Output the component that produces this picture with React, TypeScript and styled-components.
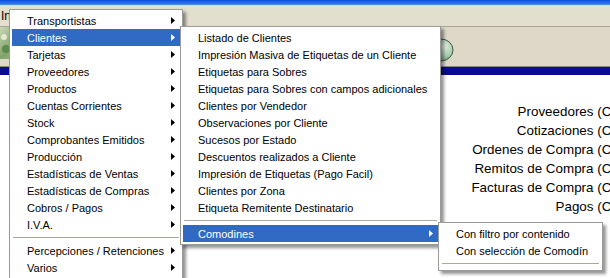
import styled, { createGlobalStyle } from "styled-components";

const GlobalStyle = createGlobalStyle`
  html, body {
    margin: 0;
    padding: 0;
    overflow: hidden;
    background: #fff;
  }
  body {
    font-family: "Liberation Sans", Arial, sans-serif;
  }
`;

type Entry = { label: string; sub?: boolean; active?: boolean } | "sep";

const mainItems: Entry[] = [
  { label: "Transportistas", sub: true },
  { label: "Clientes", sub: true, active: true },
  { label: "Tarjetas", sub: true },
  { label: "Proveedores", sub: true },
  { label: "Productos", sub: true },
  { label: "Cuentas Corrientes", sub: true },
  { label: "Stock", sub: true },
  { label: "Comprobantes Emitidos", sub: true },
  { label: "Producción", sub: true },
  { label: "Estadísticas de Ventas", sub: true },
  { label: "Estadísticas de Compras", sub: true },
  { label: "Cobros / Pagos", sub: true },
  { label: "I.V.A.", sub: true },
  "sep",
  { label: "Percepciones / Retenciones", sub: true },
  { label: "Varios", sub: true },
];

const clientItems: Entry[] = [
  { label: "Listado de Clientes" },
  { label: "Impresión Masiva de Etiquetas de un Cliente" },
  { label: "Etiquetas para Sobres" },
  { label: "Etiquetas para Sobres con campos adicionales" },
  { label: "Clientes por Vendedor" },
  { label: "Observaciones por Cliente" },
  { label: "Sucesos por Estado" },
  { label: "Descuentos realizados a Cliente" },
  { label: "Impresión de Etiquetas (Pago Facil)" },
  { label: "Clientes por Zona" },
  { label: "Etiqueta Remitente Destinatario" },
  "sep",
  { label: "Comodines", sub: true, active: true },
];

const wildcardItems: Entry[] = [
  { label: "Con filtro por contenido" },
  { label: "Con selección de Comodín" },
  "sep",
];

const reports = [
  "Proveedores",
  "Cotizaciones",
  "Ordenes de Compra",
  "Remitos de Compra",
  "Facturas de Compra",
  "Pagos",
];

function Arrow() {
  return (
    <svg width="4" height="7" viewBox="0 0 4 7">
      <polygon points="0,0 4,3.5 0,7" fill="currentColor" />
    </svg>
  );
}

function Menu({
  items,
  left,
  top,
  width,
}: {
  items: Entry[];
  left: number;
  top: number;
  width: number;
}) {
  return (
    <MenuPanel $left={left} $top={top} $width={width}>
      {items.map((it, i) =>
        it === "sep" ? (
          <Separator key={i} />
        ) : (
          <MenuItem key={i} $active={!!it.active}>
            <span>{it.label}</span>
            {it.sub && <Arrow />}
          </MenuItem>
        )
      )}
    </MenuPanel>
  );
}

export default function App() {
  return (
    <>
      <GlobalStyle />
      <Window>
        <TitleStrip />
        <MenuBar>
          <MenuBarItem>Informes</MenuBarItem>
        </MenuBar>
        <Toolbar>
          <ToolIcon $offset={0}>
            <svg width="30" height="32" viewBox="0 0 30 32">
              <defs>
                <linearGradient id="leaf" x1="0" y1="0" x2="1" y2="1">
                  <stop offset="0" stopColor="#c9d8b4" />
                  <stop offset="0.5" stopColor="#7fa36a" />
                  <stop offset="1" stopColor="#b6c9a0" />
                </linearGradient>
              </defs>
              <rect x="0" y="0" width="30" height="32" fill="url(#leaf)" />
              <circle cx="4" cy="10" r="3" fill="#e4e8cf" />
              <circle cx="6" cy="22" r="4" fill="#5e8a4c" />
            </svg>
          </ToolIcon>
          <ToolIcon $offset={398}>
            <svg width="26" height="24" viewBox="0 0 26 24">
              <defs>
                <radialGradient id="orb" cx="0.6" cy="0.35" r="0.7">
                  <stop offset="0" stopColor="#e6f2e6" />
                  <stop offset="0.6" stopColor="#a9cdb0" />
                  <stop offset="1" stopColor="#6f9a7a" />
                </radialGradient>
              </defs>
              <ellipse cx="13" cy="12" rx="12" ry="11" fill="url(#orb)" stroke="#3f5a46" strokeWidth="1" />
            </svg>
          </ToolIcon>
        </Toolbar>
        <HeaderBar />
        <Content>
          {reports.map((r) => (
            <ReportLine key={r}>{r} (Consulta)</ReportLine>
          ))}
        </Content>

        <Menu items={mainItems} left={9} top={9} width={174} />
        <Menu items={clientItems} left={180} top={26} width={261} />
        <Menu items={wildcardItems} left={438} top={222} width={165} />
      </Window>
    </>
  );
}

const Window = styled.div`
  position: relative;
  width: 610px;
  height: 278px;
  overflow: hidden;
  background: #fff;
`;

const TitleStrip = styled.div`
  height: 5px;
  background: linear-gradient(#0a4ddb, #2f74ea 70%, #5b93ec);
`;

const MenuBar = styled.div`
  height: 21px;
  display: flex;
  align-items: center;
  padding-left: 1px;
  background: #e3dfcf;
  border-bottom: 1px solid #a9a593;
`;

const MenuBarItem = styled.span`
  font-size: 12px;
  color: #000;
`;

const Toolbar = styled.div`
  height: 39px;
  display: flex;
  align-items: center;
  background: #ddd8c7;
  border-bottom: 1px solid #8c8878;
`;

const ToolIcon = styled.div<{ $offset: number }>`
  display: flex;
  margin-left: ${(p) => p.$offset}px;
  margin-top: ${(p) => (p.$offset ? 6 : -8)}px;
`;

const HeaderBar = styled.div`
  height: 8px;
  background: #0b0b94;
`;

const Content = styled.div`
  padding-top: 27px;
  margin-right: -49px;
  text-align: right;
`;

const ReportLine = styled.div`
  font-size: 13.4px;
  line-height: 19px;
  color: #000;
  white-space: nowrap;
`;

const MenuPanel = styled.div<{ $left: number; $top: number; $width: number }>`
  position: absolute;
  left: ${(p) => p.$left}px;
  top: ${(p) => p.$top}px;
  width: ${(p) => p.$width}px;
  box-sizing: border-box;
  padding: 2px;
  background: #fff;
  border: 1px solid #9a9a96;
  box-shadow: 3px 3px 3px rgba(0, 0, 0, 0.42);
`;

const MenuItem = styled.div<{ $active: boolean }>`
  height: 17px;
  display: flex;
  align-items: center;
  justify-content: space-between;
  padding: 0 5px 0 15px;
  font-size: 11px;
  white-space: nowrap;
  color: ${(p) => (p.$active ? "#fff" : "#000")};
  background: ${(p) => (p.$active ? "#316ac5" : "transparent")};
`;

const Separator = styled.div`
  height: 9px;
  display: flex;
  align-items: center;
  &::after {
    content: "";
    flex: 1;
    margin: 0 1px;
    border-top: 1px solid #aca899;
  }
`;
